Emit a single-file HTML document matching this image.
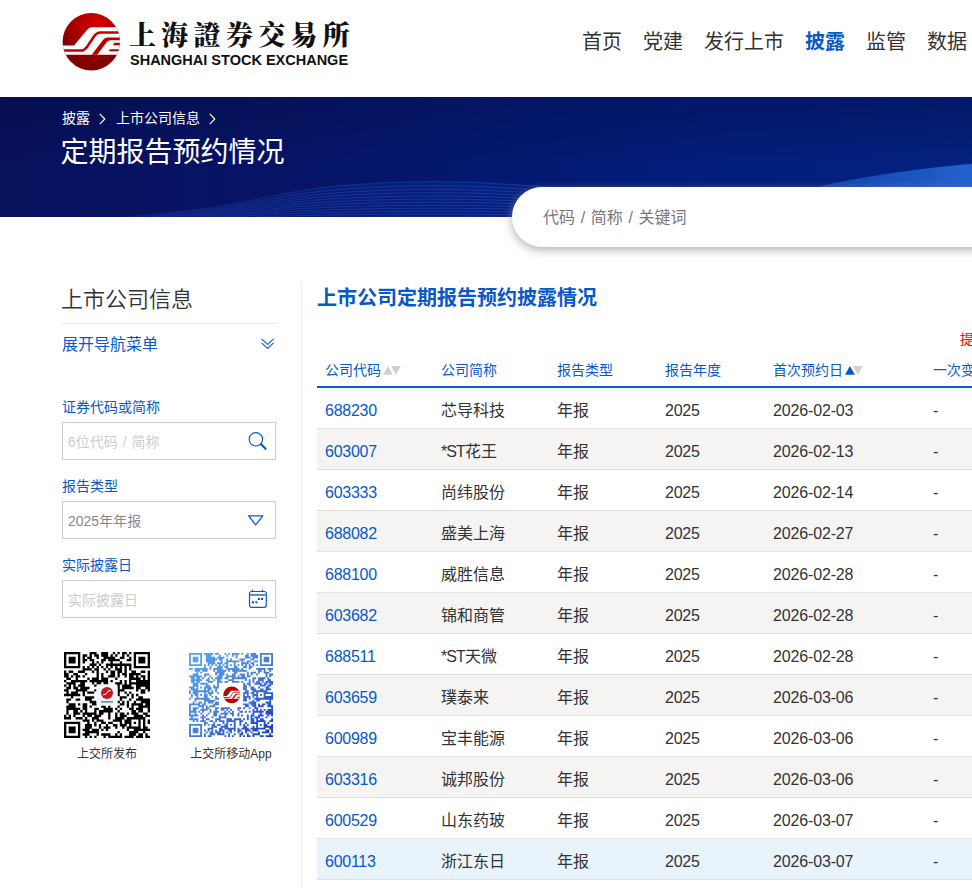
<!DOCTYPE html>
<html lang="zh-CN">
<head>
<meta charset="utf-8">
<title>定期报告预约情况 | 上海证券交易所</title>
<style>
*{box-sizing:border-box;}
html,body{margin:0;padding:0;}
body{width:972px;height:888px;overflow:hidden;background:#fff;position:relative;
 font-family:"Liberation Sans","Noto Sans CJK SC",sans-serif;color:#333;}
a{color:#0858c8;text-decoration:none;cursor:pointer;}
/* header */
header{position:absolute;left:0;top:0;width:972px;height:97px;background:#fff;}
.logo{position:absolute;left:58px;top:8px;width:300px;height:70px;}
.logo-mark{position:absolute;left:0;top:0;}
.logo-cn{position:absolute;left:71px;top:9px;font-family:"Noto Serif CJK SC",serif;font-weight:900;font-size:27px;line-height:34px;letter-spacing:5.3px;color:#111;white-space:nowrap;}
.logo-en{position:absolute;left:72px;top:43px;font-family:"Liberation Sans",sans-serif;font-weight:bold;font-size:14.5px;line-height:18px;color:#111;white-space:nowrap;letter-spacing:0px;}
nav{position:absolute;left:571.5px;top:0;height:97px;white-space:nowrap;}
nav ul{list-style:none;margin:0;padding:0;display:flex;}
nav li{padding:0 10.5px;font-size:20px;line-height:28px;height:28px;margin-top:28px;color:#333;}
nav li.on{color:#0858c8;font-weight:bold;}
/* banner */
.banner{position:absolute;left:0;top:97px;width:972px;height:120px;overflow:hidden;
 background:linear-gradient(180deg,rgba(3,8,50,.28) 0%,rgba(3,8,50,0) 55%),linear-gradient(90deg,#07115c 0%,#061466 30%,#031a73 55%,#021e7c 75%,#03217e 100%);}
.banner > svg{position:absolute;left:0;top:0;}
.crumb{position:absolute;left:62px;top:10px;font-size:14px;line-height:22px;color:#fff;white-space:nowrap;}
.crumb span{display:inline-block;vertical-align:top;}
.crumb svg{display:inline-block;vertical-align:top;margin:5.5px 10px 0 9px;}
.banner h1{position:absolute;left:60.5px;top:37px;margin:0;font-size:28px;line-height:38px;font-weight:normal;color:#fff;white-space:nowrap;}
.search{position:absolute;left:512px;top:187px;width:520px;height:60px;border-radius:30px 0 0 30px;background:#fff;box-shadow:0 3px 10px rgba(150,150,150,.75);}
.search span{position:absolute;left:31px;top:18.5px;font-size:16px;line-height:24px;color:#777;white-space:nowrap;word-spacing:1.2px;}
/* sidebar */
aside{position:absolute;left:62px;top:282px;width:214px;}
aside h2{margin:0;font-size:22px;line-height:30px;font-weight:350;color:#333;position:absolute;left:-1px;top:3px;white-space:nowrap;}
.hr{position:absolute;left:0;top:41px;width:214px;height:1px;background:#e6e6e6;}
.expand{position:absolute;left:0;top:51px;width:214px;font-size:16px;line-height:24px;color:#0858c8;white-space:nowrap;}
.expand svg{position:absolute;left:198px;top:3px;}
.lbl{position:absolute;left:0;font-size:14px;line-height:20px;color:#0858c8;white-space:nowrap;}
.inp{position:absolute;left:0;width:214px;height:38px;border:1px solid #ccc;background:#fff;font-size:14px;line-height:38px;padding-left:5px;color:#ccc;white-space:nowrap;word-spacing:1px;}
.inp.sel{color:#888;}
.inp svg{position:absolute;}
.qr{position:absolute;}
.qrl{position:absolute;font-size:12px;line-height:16px;color:#333;white-space:nowrap;text-align:center;}
.vline{position:absolute;left:301px;top:282px;width:1px;height:620px;background:#ececf0;}
/* main */
main{position:absolute;left:317px;top:282px;width:900px;}
main h3{margin:0;position:absolute;left:0;top:2px;font-size:20px;line-height:28px;font-weight:bold;color:#0858c8;white-space:nowrap;}
.tip{position:absolute;left:643px;top:47px;font-size:14px;line-height:20px;color:#f00;white-space:nowrap;}
table{position:absolute;left:0;top:70px;border-collapse:separate;border-spacing:0;table-layout:fixed;width:900px;}
th{height:36px;padding:2px 8px 0;text-align:left;font-size:14px;font-weight:normal;color:#0858c8;white-space:nowrap;border-bottom:2px solid #0858c8;line-height:20px;vertical-align:middle;}
td{height:41px;padding:5px 8px 0;font-size:16px;line-height:22px;color:#333;white-space:nowrap;border-bottom:1px solid #e0e0e0;vertical-align:middle;}
td.n{letter-spacing:-0.27px;}
td.d{letter-spacing:-0.15px;}
.st{letter-spacing:-0.9px;}
tr:nth-child(even) td{background:#f5f4f3;}
tr.hover td{background:#e9f3fb;}
.sort{display:inline-block;vertical-align:top;margin:6px 0 0 2px;}
</style>
</head>
<body>
<header>
 <div class="logo">
  <svg class="logo-mark" viewBox="0 0 888 888" width="68" height="68">
<defs>
<radialGradient id="lg" cx="500" cy="210" r="520" gradientUnits="userSpaceOnUse"><stop offset="0" stop-color="#d60000"/><stop offset="0.55" stop-color="#a80000"/><stop offset="1" stop-color="#7e0000"/></radialGradient>
<clipPath id="lc"><circle cx="435" cy="440" r="375"/></clipPath>
</defs>
<circle cx="435" cy="440" r="375" fill="url(#lg)"/>
<g clip-path="url(#lc)">
<path d="M440 250H900V610H0V490H210L375 290Q405 250 440 250Z" fill="#fff"/>
<path d="M40 555H300C340 555 355 540 378 508L470 372C495 335 515 320 555 320H830" fill="none" stroke="#c40000" stroke-width="34"/>
<path d="M440 612L590 415Q612 385 652 385H830V420H690Q655 420 638 445L512 612Z" fill="#b80000"/>
<path d="M738 455H830V485H716Z" fill="#b00000"/>
<path d="M682 540H830V566H660Z" fill="#a80000"/>
</g>
</svg>
  <div class="logo-cn">上海證券交易所</div>
  <div class="logo-en">SHANGHAI STOCK EXCHANGE</div>
 </div>
 <nav><ul><li>首页</li><li>党建</li><li>发行上市</li><li class="on">披露</li><li>监管</li><li>数据</li><li>规则</li></ul></nav>
</header>
<section class="banner">
 <svg width="972" height="120" viewBox="0 0 972 120">
  <defs>
   <linearGradient id="sw" gradientUnits="userSpaceOnUse" x1="690" y1="0" x2="972" y2="0"><stop offset="0" stop-color="#0d3aa6" stop-opacity="0"/><stop offset="0.4" stop-color="#1444ac" stop-opacity="0.9"/><stop offset="0.7" stop-color="#1a50ba"/><stop offset="1" stop-color="#2461cc"/></linearGradient><filter id="bl" x="-5%" y="-20%" width="110%" height="140%"><feGaussianBlur stdDeviation="0.7"/></filter>
   <linearGradient id="ln" gradientUnits="userSpaceOnUse" x1="100" y1="0" x2="620" y2="0"><stop offset="0" stop-color="#2f62d4" stop-opacity="0"/><stop offset="0.3" stop-color="#2f62d4" stop-opacity="0.4"/><stop offset="0.8" stop-color="#2f62d4" stop-opacity="0.55"/><stop offset="1" stop-color="#2f62d4" stop-opacity="0.3"/></linearGradient>
   <linearGradient id="hl" gradientUnits="userSpaceOnUse" x1="100" y1="0" x2="620" y2="0"><stop offset="0" stop-color="#1238a8" stop-opacity="0"/><stop offset="0.5" stop-color="#1238a8" stop-opacity="0.22"/><stop offset="1" stop-color="#1238a8" stop-opacity="0.18"/></linearGradient>
  </defs>
  <path d="M690 124C750 110 795 96 818 90C850 82 900 73 980 66V124Z" fill="url(#sw)" filter="url(#bl)"/>
  <path d="M60 124.9 L70 124.4 L80 123.8 L90 123.0 L100 122.2 L110 121.2 L120 120.3 L130 119.3 L140 118.4 L150 117.4 L160 116.3 L170 115.3 L180 114.2 L190 113.1 L200 111.9 L210 110.6 L220 109.1 L230 107.4 L240 105.6 L250 103.7 L260 101.7 L270 99.6 L280 97.6 L290 95.7 L300 94.0 L310 92.4 L320 91.0 L330 89.8 L340 88.7 L350 88.0 L360 87.3 L370 86.7 L380 86.1 L390 85.6 L400 85.2 L410 84.9 L420 84.8 L430 84.7 L440 84.8 L450 84.9 L460 85.0 L470 85.3 L480 85.7 L490 86.2 L500 86.8 L510 87.4 L520 88.1 L530 88.8 L540 89.6 L550 90.4 L560 91.4 L570 92.3 L580 93.4 L590 94.4 L600 95.5 L610 96.4 L620 97.3 L630 98.1 L640 98.7 L640 121 L60 121Z" fill="url(#hl)"/>
  <g fill="none" stroke="url(#ln)" stroke-width="0.7">
   <path d="M60 124.9 L70 124.4 L80 123.8 L90 123.0 L100 122.2 L110 121.2 L120 120.3 L130 119.3 L140 118.4 L150 117.4 L160 116.3 L170 115.3 L180 114.2 L190 113.1 L200 111.9 L210 110.6 L220 109.1 L230 107.4 L240 105.6 L250 103.7 L260 101.7 L270 99.6 L280 97.6 L290 95.7 L300 94.0 L310 92.4 L320 91.0 L330 89.8 L340 88.7 L350 88.0 L360 87.3 L370 86.7 L380 86.1 L390 85.6 L400 85.2 L410 84.9 L420 84.8 L430 84.7 L440 84.8 L450 84.9 L460 85.0 L470 85.3 L480 85.7 L490 86.2 L500 86.8 L510 87.4 L520 88.1 L530 88.8 L540 89.6 L550 90.4 L560 91.4 L570 92.3 L580 93.4 L590 94.4 L600 95.5 L610 96.4 L620 97.3 L630 98.1 L640 98.7"/>
   <path d="M60 124.7 L70 124.3 L80 123.7 L90 123.0 L100 122.3 L110 121.4 L120 120.6 L130 119.7 L140 118.9 L150 118.0 L160 117.1 L170 116.1 L180 115.2 L190 114.2 L200 113.1 L210 111.9 L220 110.6 L230 109.1 L240 107.5 L250 105.8 L260 103.9 L270 102.1 L280 100.3 L290 98.6 L300 97.1 L310 95.7 L320 94.4 L330 93.3 L340 92.4 L350 91.7 L360 91.1 L370 90.5 L380 90.1 L390 89.6 L400 89.2 L410 89.0 L420 88.9 L430 88.8 L440 88.8 L450 88.9 L460 89.1 L470 89.3 L480 89.7 L490 90.1 L500 90.7 L510 91.2 L520 91.8 L530 92.4 L540 93.1 L550 93.9 L560 94.8 L570 95.6 L580 96.5 L590 97.4 L600 98.4 L610 99.3 L620 100.1 L630 100.8 L640 101.3"/>
   <path d="M60 124.6 L70 124.1 L80 123.6 L90 123.0 L100 122.3 L110 121.6 L120 120.8 L130 120.0 L140 119.3 L150 118.5 L160 117.7 L170 116.8 L180 116.0 L190 115.1 L200 114.1 L210 113.1 L220 111.8 L230 110.5 L240 109.1 L250 107.5 L260 105.9 L270 104.3 L280 102.7 L290 101.1 L300 99.8 L310 98.5 L320 97.4 L330 96.4 L340 95.6 L350 94.9 L360 94.4 L370 93.9 L380 93.5 L390 93.1 L400 92.7 L410 92.5 L420 92.4 L430 92.4 L440 92.4 L450 92.5 L460 92.6 L470 92.8 L480 93.1 L490 93.5 L500 94.0 L510 94.5 L520 95.0 L530 95.6 L540 96.2 L550 96.9 L560 97.7 L570 98.5 L580 99.3 L590 100.1 L600 101.0 L610 101.7 L620 102.5 L630 103.1 L640 103.6"/>
   <path d="M60 124.4 L70 124.0 L80 123.6 L90 123.0 L100 122.4 L110 121.7 L120 121.1 L130 120.4 L140 119.7 L150 119.0 L160 118.3 L170 117.5 L180 116.8 L190 116.0 L200 115.1 L210 114.1 L220 113.1 L230 111.9 L240 110.6 L250 109.2 L260 107.8 L270 106.3 L280 104.9 L290 103.5 L300 102.3 L310 101.2 L320 100.2 L330 99.3 L340 98.6 L350 98.0 L360 97.5 L370 97.1 L380 96.7 L390 96.4 L400 96.1 L410 95.9 L420 95.8 L430 95.7 L440 95.7 L450 95.8 L460 95.9 L470 96.1 L480 96.4 L490 96.8 L500 97.2 L510 97.6 L520 98.1 L530 98.6 L540 99.2 L550 99.8 L560 100.5 L570 101.1 L580 101.9 L590 102.6 L600 103.4 L610 104.1 L620 104.7 L630 105.2 L640 105.7"/>
   <path d="M60 124.2 L70 123.9 L80 123.5 L90 123.0 L100 122.5 L110 121.9 L120 121.3 L130 120.7 L140 120.1 L150 119.5 L160 118.8 L170 118.2 L180 117.5 L190 116.8 L200 116.1 L210 115.2 L220 114.3 L230 113.2 L240 112.1 L250 110.9 L260 109.6 L270 108.3 L280 107.1 L290 105.9 L300 104.8 L310 103.8 L320 102.9 L330 102.1 L340 101.5 L350 101.0 L360 100.6 L370 100.2 L380 99.8 L390 99.5 L400 99.3 L410 99.1 L420 99.0 L430 99.0 L440 99.0 L450 99.0 L460 99.2 L470 99.3 L480 99.6 L490 99.9 L500 100.3 L510 100.6 L520 101.1 L530 101.5 L540 102.0 L550 102.6 L560 103.1 L570 103.8 L580 104.4 L590 105.0 L600 105.7 L610 106.3 L620 106.9 L630 107.4 L640 107.8"/>
   <path d="M60 124.1 L70 123.8 L80 123.4 L90 123.0 L100 122.6 L110 122.0 L120 121.5 L130 121.0 L140 120.5 L150 119.9 L160 119.4 L170 118.8 L180 118.2 L190 117.6 L200 117.0 L210 116.2 L220 115.4 L230 114.5 L240 113.5 L250 112.5 L260 111.4 L270 110.2 L280 109.2 L290 108.1 L300 107.2 L310 106.3 L320 105.6 L330 104.9 L340 104.3 L350 103.9 L360 103.5 L370 103.2 L380 102.9 L390 102.6 L400 102.4 L410 102.2 L420 102.2 L430 102.1 L440 102.2 L450 102.2 L460 102.3 L470 102.4 L480 102.7 L490 102.9 L500 103.3 L510 103.6 L520 104.0 L530 104.3 L540 104.8 L550 105.2 L560 105.8 L570 106.3 L580 106.8 L590 107.4 L600 108.0 L610 108.5 L620 109.0 L630 109.4 L640 109.8"/>
   <path d="M60 123.9 L70 123.7 L80 123.4 L90 123.0 L100 122.6 L110 122.2 L120 121.7 L130 121.3 L140 120.8 L150 120.4 L160 119.9 L170 119.4 L180 118.9 L190 118.4 L200 117.9 L210 117.2 L220 116.5 L230 115.8 L240 114.9 L250 114.0 L260 113.1 L270 112.1 L280 111.2 L290 110.3 L300 109.5 L310 108.8 L320 108.1 L330 107.6 L340 107.1 L350 106.7 L360 106.4 L370 106.1 L380 105.9 L390 105.7 L400 105.5 L410 105.3 L420 105.3 L430 105.2 L440 105.3 L450 105.3 L460 105.4 L470 105.5 L480 105.7 L490 105.9 L500 106.2 L510 106.5 L520 106.8 L530 107.1 L540 107.5 L550 107.9 L560 108.3 L570 108.8 L580 109.2 L590 109.7 L600 110.2 L610 110.7 L620 111.1 L630 111.4 L640 111.7"/>
   <path d="M60 123.7 L70 123.5 L80 123.3 L90 123.0 L100 122.7 L110 122.3 L120 122.0 L130 121.6 L140 121.2 L150 120.8 L160 120.4 L170 120.0 L180 119.6 L190 119.2 L200 118.7 L210 118.2 L220 117.6 L230 117.0 L240 116.3 L250 115.6 L260 114.8 L270 114.0 L280 113.2 L290 112.5 L300 111.8 L310 111.2 L320 110.7 L330 110.2 L340 109.8 L350 109.5 L360 109.3 L370 109.0 L380 108.8 L390 108.6 L400 108.5 L410 108.4 L420 108.3 L430 108.3 L440 108.3 L450 108.3 L460 108.4 L470 108.5 L480 108.7 L490 108.9 L500 109.1 L510 109.3 L520 109.6 L530 109.8 L540 110.1 L550 110.5 L560 110.8 L570 111.2 L580 111.6 L590 112.0 L600 112.4 L610 112.8 L620 113.1 L630 113.4 L640 113.7"/>
   <path d="M60 123.6 L70 123.4 L80 123.2 L90 123.0 L100 122.8 L110 122.5 L120 122.2 L130 121.9 L140 121.6 L150 121.3 L160 121.0 L170 120.6 L180 120.3 L190 120.0 L200 119.6 L210 119.2 L220 118.7 L230 118.2 L240 117.7 L250 117.1 L260 116.5 L270 115.8 L280 115.2 L290 114.7 L300 114.1 L310 113.6 L320 113.2 L330 112.8 L340 112.5 L350 112.3 L360 112.1 L370 111.9 L380 111.7 L390 111.6 L400 111.4 L410 111.4 L420 111.3 L430 111.3 L440 111.3 L450 111.3 L460 111.4 L470 111.5 L480 111.6 L490 111.8 L500 111.9 L510 112.1 L520 112.3 L530 112.5 L540 112.8 L550 113.0 L560 113.3 L570 113.6 L580 113.9 L590 114.3 L600 114.6 L610 114.9 L620 115.2 L630 115.4 L640 115.6"/>
   <path d="M60 123.4 L70 123.3 L80 123.2 L90 123.0 L100 122.8 L110 122.6 L120 122.4 L130 122.2 L140 121.9 L150 121.7 L160 121.5 L170 121.2 L180 121.0 L190 120.8 L200 120.5 L210 120.2 L220 119.8 L230 119.4 L240 119.0 L250 118.6 L260 118.1 L270 117.7 L280 117.2 L290 116.8 L300 116.4 L310 116.0 L320 115.7 L330 115.4 L340 115.2 L350 115.0 L360 114.9 L370 114.7 L380 114.6 L390 114.5 L400 114.4 L410 114.3 L420 114.3 L430 114.3 L440 114.3 L450 114.3 L460 114.3 L470 114.4 L480 114.5 L490 114.6 L500 114.7 L510 114.9 L520 115.0 L530 115.2 L540 115.4 L550 115.6 L560 115.8 L570 116.0 L580 116.2 L590 116.5 L600 116.7 L610 116.9 L620 117.1 L630 117.3 L640 117.5"/>
   <path d="M60 123.3 L70 123.2 L80 123.1 L90 123.0 L100 122.9 L110 122.7 L120 122.6 L130 122.4 L140 122.3 L150 122.1 L160 122.0 L170 121.8 L180 121.7 L190 121.5 L200 121.3 L210 121.1 L220 120.9 L230 120.6 L240 120.4 L250 120.1 L260 119.8 L270 119.5 L280 119.2 L290 118.9 L300 118.6 L310 118.4 L320 118.2 L330 118.0 L340 117.8 L350 117.7 L360 117.6 L370 117.5 L380 117.4 L390 117.3 L400 117.3 L410 117.2 L420 117.2 L430 117.2 L440 117.2 L450 117.2 L460 117.3 L470 117.3 L480 117.4 L490 117.4 L500 117.5 L510 117.6 L520 117.7 L530 117.8 L540 117.9 L550 118.1 L560 118.2 L570 118.4 L580 118.5 L590 118.7 L600 118.8 L610 119.0 L620 119.1 L630 119.2 L640 119.3"/>
   <path d="M60 123.1 L70 123.1 L80 123.1 L90 123.0 L100 122.9 L110 122.9 L120 122.8 L130 122.7 L140 122.7 L150 122.6 L160 122.5 L170 122.4 L180 122.3 L190 122.3 L200 122.2 L210 122.1 L220 122.0 L230 121.8 L240 121.7 L250 121.5 L260 121.4 L270 121.2 L280 121.1 L290 120.9 L300 120.8 L310 120.7 L320 120.6 L330 120.5 L340 120.4 L350 120.4 L360 120.3 L370 120.3 L380 120.2 L390 120.2 L400 120.2 L410 120.1 L420 120.1 L430 120.1 L440 120.1 L450 120.1 L460 120.1 L470 120.2 L480 120.2 L490 120.2 L500 120.3 L510 120.3 L520 120.4 L530 120.4 L540 120.5 L550 120.5 L560 120.6 L570 120.7 L580 120.8 L590 120.8 L600 120.9 L610 121.0 L620 121.1 L630 121.1 L640 121.2"/>
   <path d="M60 123.0 L70 123.0 L80 123.0 L90 123.0 L100 123.0 L110 123.0 L120 123.0 L130 123.0 L140 123.0 L150 123.0 L160 123.0 L170 123.0 L180 123.0 L190 123.0 L200 123.0 L210 123.0 L220 123.0 L230 123.0 L240 123.0 L250 123.0 L260 123.0 L270 123.0 L280 123.0 L290 123.0 L300 123.0 L310 123.0 L320 123.0 L330 123.0 L340 123.0 L350 123.0 L360 123.0 L370 123.0 L380 123.0 L390 123.0 L400 123.0 L410 123.0 L420 123.0 L430 123.0 L440 123.0 L450 123.0 L460 123.0 L470 123.0 L480 123.0 L490 123.0 L500 123.0 L510 123.0 L520 123.0 L530 123.0 L540 123.0 L550 123.0 L560 123.0 L570 123.0 L580 123.0 L590 123.0 L600 123.0 L610 123.0 L620 123.0 L630 123.0 L640 123.0"/>
  </g>
 </svg>
 <div class="crumb"><span>披露</span><svg width="7" height="12" viewBox="0 0 7 12" fill="none" stroke="#fff" stroke-width="1.2"><path d="M0.8 0.8L5.8 6L0.8 11.2"/></svg><span>上市公司信息</span><svg width="7" height="12" viewBox="0 0 7 12" fill="none" stroke="#fff" stroke-width="1.2"><path d="M0.8 0.8L5.8 6L0.8 11.2"/></svg></div>
 <h1>定期报告预约情况</h1>
</section>
<div class="search"><span>代码 / 简称 / 关键词</span></div>

<aside>
 <h2>上市公司信息</h2>
 <div class="hr"></div>
 <div class="expand">展开导航菜单
  <svg width="16" height="16" viewBox="0 0 16 16" fill="none" stroke="#0a63d2" stroke-width="1.15"><path d="M1.6 2.8L7.6 8.4L13.6 2.8M1.6 6.9L7.6 12.5L13.6 6.9"/></svg>
 </div>
 <div class="lbl" style="top:115px">证券代码或简称</div>
 <div class="inp" style="top:140px">6位代码 / 简称
  <svg style="left:184px;top:7px" width="22" height="22" viewBox="0 0 22 22" fill="none" stroke="#0858c8" stroke-width="1.15"><circle cx="8.9" cy="9.3" r="6.7"/><path d="M13.9 14.1L18.6 18.8" stroke-width="2.1" stroke-linecap="round"/></svg>
 </div>
 <div class="lbl" style="top:194px">报告类型</div>
 <div class="inp sel" style="top:219px">2025年年报
  <svg style="left:184px;top:10px" width="20" height="16" viewBox="0 0 20 16" fill="none" stroke="#0858c8" stroke-width="1.3" stroke-linejoin="round"><path d="M1.6 3.9H15.8L8.7 12.9Z"/></svg>
 </div>
 <div class="lbl" style="top:273px">实际披露日</div>
 <div class="inp" style="top:298px">实际披露日
  <svg style="left:184px;top:7px" width="22" height="22" viewBox="0 0 22 22" fill="none" stroke="#0858c8" stroke-width="1.2"><rect x="2.5" y="3.5" width="16.8" height="15.8" rx="2"/><path d="M5.4 1.7V3.4M15.6 1.7V3.4"/><path d="M3 6.95H18.8" stroke="#4a8ad2" stroke-width="1.9"/><path d="M10.9 10H12.9V12H10.9ZM14 10H16V12H14ZM5 13.3H7V15.3H5ZM8.4 13.3H10.4V15.3H8.4Z" fill="#0858c8" stroke="none"/></svg>
 </div>
 <svg class="qr" style="left:2px;top:370px" width="86" height="86" viewBox="0 0 37 37"><path d="M0 0h7v1h-7zM11 0h3v1h-3zM16 0h3v1h-3zM21 0h1v1h-1zM23 0h1v1h-1zM25 0h2v1h-2zM28 0h1v1h-1zM30 0h7v1h-7zM0 1h1v1h-1zM6 1h1v1h-1zM8 1h2v1h-2zM11 1h1v1h-1zM13 1h2v1h-2zM16 1h3v1h-3zM20 1h1v1h-1zM22 1h1v1h-1zM25 1h1v1h-1zM27 1h1v1h-1zM30 1h1v1h-1zM36 1h1v1h-1zM0 2h1v1h-1zM2 2h3v1h-3zM6 2h1v1h-1zM8 2h1v1h-1zM10 2h2v1h-2zM14 2h1v1h-1zM17 2h5v1h-5zM24 2h2v1h-2zM28 2h1v1h-1zM30 2h1v1h-1zM32 2h3v1h-3zM36 2h1v1h-1zM0 3h1v1h-1zM2 3h3v1h-3zM6 3h1v1h-1zM8 3h2v1h-2zM11 3h2v1h-2zM16 3h2v1h-2zM19 3h5v1h-5zM27 3h2v1h-2zM30 3h1v1h-1zM32 3h3v1h-3zM36 3h1v1h-1zM0 4h1v1h-1zM2 4h3v1h-3zM6 4h1v1h-1zM8 4h1v1h-1zM12 4h1v1h-1zM14 4h1v1h-1zM16 4h1v1h-1zM20 4h1v1h-1zM24 4h1v1h-1zM30 4h1v1h-1zM32 4h3v1h-3zM36 4h1v1h-1zM0 5h1v1h-1zM6 5h1v1h-1zM11 5h3v1h-3zM15 5h1v1h-1zM18 5h11v1h-11zM30 5h1v1h-1zM36 5h1v1h-1zM0 6h7v1h-7zM8 6h1v1h-1zM10 6h1v1h-1zM12 6h1v1h-1zM14 6h1v1h-1zM16 6h1v1h-1zM18 6h1v1h-1zM20 6h1v1h-1zM22 6h1v1h-1zM24 6h1v1h-1zM26 6h1v1h-1zM28 6h1v1h-1zM30 6h7v1h-7zM8 7h4v1h-4zM13 7h2v1h-2zM17 7h1v1h-1zM19 7h1v1h-1zM22 7h3v1h-3zM26 7h1v1h-1zM28 7h1v1h-1zM0 8h1v1h-1zM2 8h2v1h-2zM6 8h3v1h-3zM12 8h1v1h-1zM14 8h1v1h-1zM18 8h1v1h-1zM20 8h2v1h-2zM23 8h2v1h-2zM26 8h1v1h-1zM29 8h2v1h-2zM33 8h2v1h-2zM36 8h1v1h-1zM0 9h2v1h-2zM4 9h2v1h-2zM9 9h1v1h-1zM14 9h1v1h-1zM16 9h1v1h-1zM20 9h2v1h-2zM23 9h1v1h-1zM25 9h2v1h-2zM28 9h5v1h-5zM36 9h1v1h-1zM0 10h2v1h-2zM3 10h1v1h-1zM5 10h2v1h-2zM8 10h1v1h-1zM14 10h1v1h-1zM16 10h1v1h-1zM19 10h3v1h-3zM23 10h1v1h-1zM26 10h1v1h-1zM28 10h2v1h-2zM31 10h1v1h-1zM33 10h2v1h-2zM36 10h1v1h-1zM1 11h2v1h-2zM5 11h1v1h-1zM10 11h1v1h-1zM12 11h3v1h-3zM16 11h3v1h-3zM22 11h1v1h-1zM28 11h5v1h-5zM34 11h1v1h-1zM36 11h1v1h-1zM0 12h1v1h-1zM3 12h7v1h-7zM11 12h8v1h-8zM20 12h1v1h-1zM24 12h1v1h-1zM26 12h1v1h-1zM28 12h1v1h-1zM31 12h6v1h-6zM1 13h4v1h-4zM7 13h2v1h-2zM12 13h1v1h-1zM14 13h2v1h-2zM17 13h2v1h-2zM22 13h3v1h-3zM26 13h1v1h-1zM28 13h9v1h-9zM0 14h1v1h-1zM2 14h1v1h-1zM4 14h1v1h-1zM6 14h3v1h-3zM13 14h1v1h-1zM23 14h1v1h-1zM25 14h4v1h-4zM31 14h6v1h-6zM1 15h2v1h-2zM4 15h2v1h-2zM7 15h4v1h-4zM23 15h1v1h-1zM25 15h5v1h-5zM31 15h2v1h-2zM35 15h2v1h-2zM0 16h2v1h-2zM5 16h5v1h-5zM13 16h1v1h-1zM23 16h3v1h-3zM31 16h1v1h-1zM33 16h2v1h-2zM36 16h1v1h-1zM1 17h1v1h-1zM3 17h3v1h-3zM8 17h1v1h-1zM10 17h3v1h-3zM23 17h1v1h-1zM26 17h1v1h-1zM28 17h1v1h-1zM33 17h2v1h-2zM0 18h7v1h-7zM8 18h1v1h-1zM23 18h1v1h-1zM27 18h1v1h-1zM29 18h1v1h-1zM31 18h1v1h-1zM3 19h1v1h-1zM9 19h4v1h-4zM24 19h3v1h-3zM29 19h1v1h-1zM32 19h2v1h-2zM1 20h2v1h-2zM5 20h2v1h-2zM9 20h3v1h-3zM24 20h1v1h-1zM28 20h1v1h-1zM31 20h6v1h-6zM1 21h1v1h-1zM11 21h3v1h-3zM23 21h1v1h-1zM25 21h1v1h-1zM27 21h1v1h-1zM30 21h1v1h-1zM33 21h4v1h-4zM2 22h3v1h-3zM6 22h1v1h-1zM8 22h2v1h-2zM12 22h2v1h-2zM24 22h2v1h-2zM27 22h1v1h-1zM29 22h5v1h-5zM35 22h2v1h-2zM1 23h4v1h-4zM8 23h2v1h-2zM11 23h1v1h-1zM16 23h2v1h-2zM19 23h1v1h-1zM23 23h1v1h-1zM27 23h1v1h-1zM29 23h1v1h-1zM32 23h5v1h-5zM1 24h6v1h-6zM8 24h2v1h-2zM13 24h2v1h-2zM17 24h4v1h-4zM22 24h1v1h-1zM24 24h1v1h-1zM28 24h2v1h-2zM31 24h3v1h-3zM36 24h1v1h-1zM1 25h1v1h-1zM4 25h2v1h-2zM7 25h1v1h-1zM9 25h1v1h-1zM13 25h1v1h-1zM15 25h6v1h-6zM23 25h1v1h-1zM29 25h2v1h-2zM32 25h2v1h-2zM36 25h1v1h-1zM1 26h1v1h-1zM4 26h3v1h-3zM8 26h6v1h-6zM15 26h2v1h-2zM19 26h1v1h-1zM22 26h1v1h-1zM24 26h2v1h-2zM27 26h1v1h-1zM29 26h3v1h-3zM34 26h2v1h-2zM0 27h1v1h-1zM2 27h1v1h-1zM4 27h1v1h-1zM8 27h1v1h-1zM10 27h2v1h-2zM13 27h3v1h-3zM19 27h1v1h-1zM22 27h1v1h-1zM24 27h3v1h-3zM30 27h4v1h-4zM35 27h2v1h-2zM0 28h3v1h-3zM5 28h3v1h-3zM9 28h1v1h-1zM12 28h3v1h-3zM19 28h1v1h-1zM22 28h4v1h-4zM27 28h8v1h-8zM8 29h3v1h-3zM12 29h1v1h-1zM14 29h3v1h-3zM21 29h4v1h-4zM26 29h3v1h-3zM32 29h1v1h-1zM34 29h1v1h-1zM36 29h1v1h-1zM0 30h7v1h-7zM10 30h1v1h-1zM13 30h1v1h-1zM16 30h2v1h-2zM19 30h2v1h-2zM24 30h1v1h-1zM26 30h3v1h-3zM30 30h1v1h-1zM32 30h1v1h-1zM34 30h1v1h-1zM36 30h1v1h-1zM0 31h1v1h-1zM6 31h1v1h-1zM9 31h3v1h-3zM13 31h1v1h-1zM15 31h1v1h-1zM18 31h1v1h-1zM21 31h2v1h-2zM24 31h3v1h-3zM28 31h1v1h-1zM32 31h1v1h-1zM34 31h1v1h-1zM0 32h1v1h-1zM2 32h3v1h-3zM6 32h1v1h-1zM9 32h3v1h-3zM15 32h1v1h-1zM17 32h3v1h-3zM22 32h1v1h-1zM25 32h1v1h-1zM27 32h6v1h-6zM34 32h2v1h-2zM0 33h1v1h-1zM2 33h3v1h-3zM6 33h1v1h-1zM8 33h3v1h-3zM12 33h3v1h-3zM16 33h1v1h-1zM18 33h1v1h-1zM27 33h1v1h-1zM30 33h7v1h-7zM0 34h1v1h-1zM2 34h3v1h-3zM6 34h1v1h-1zM9 34h6v1h-6zM23 34h1v1h-1zM28 34h4v1h-4zM34 34h1v1h-1zM0 35h1v1h-1zM6 35h1v1h-1zM8 35h3v1h-3zM14 35h1v1h-1zM16 35h4v1h-4zM22 35h1v1h-1zM24 35h1v1h-1zM28 35h3v1h-3zM32 35h2v1h-2zM35 35h1v1h-1zM0 36h7v1h-7zM9 36h1v1h-1zM11 36h1v1h-1zM13 36h1v1h-1zM17 36h1v1h-1zM19 36h6v1h-6zM26 36h4v1h-4zM31 36h3v1h-3zM35 36h2v1h-2z" fill="#000"/></svg>
 <svg class="qr" style="left:34px;top:402px" width="22" height="22" viewBox="0 0 22 22"><rect x="0.5" y="0.5" width="21" height="21" rx="3" fill="#eef6fb"/><circle cx="11" cy="9" r="6" fill="#c8161d"/><path d="M7 11L10 10L12 7L15 6.5" stroke="#fff" stroke-width="1" fill="none"/><rect x="5" y="17" width="12" height="1.6" fill="#5a8fc8"/></svg>
 <svg class="qr" style="left:127px;top:371px" width="84" height="84" viewBox="0 0 45 45">
  <defs><linearGradient id="qg" x1="0" y1="0" x2="1" y2="1"><stop offset="0" stop-color="#55aaf6"/><stop offset="0.5" stop-color="#4a7fd6"/><stop offset="1" stop-color="#1136c8"/></linearGradient></defs>
  <path d="M0 0h7v1h-7zM8 0h5v1h-5zM14 0h2v1h-2zM19 0h1v1h-1zM21 0h1v1h-1zM23 0h4v1h-4zM28 0h1v1h-1zM31 0h1v1h-1zM33 0h3v1h-3zM38 0h7v1h-7zM0 1h1v1h-1zM6 1h1v1h-1zM9 1h3v1h-3zM16 1h1v1h-1zM20 1h1v1h-1zM23 1h1v1h-1zM25 1h1v1h-1zM30 1h2v1h-2zM33 1h4v1h-4zM38 1h1v1h-1zM44 1h1v1h-1zM0 2h1v1h-1zM2 2h3v1h-3zM6 2h1v1h-1zM9 2h5v1h-5zM15 2h4v1h-4zM25 2h1v1h-1zM30 2h3v1h-3zM34 2h3v1h-3zM38 2h1v1h-1zM40 2h3v1h-3zM44 2h1v1h-1zM0 3h1v1h-1zM2 3h3v1h-3zM6 3h1v1h-1zM9 3h6v1h-6zM16 3h2v1h-2zM20 3h1v1h-1zM22 3h1v1h-1zM27 3h3v1h-3zM33 3h2v1h-2zM38 3h1v1h-1zM40 3h3v1h-3zM44 3h1v1h-1zM0 4h1v1h-1zM2 4h3v1h-3zM6 4h1v1h-1zM9 4h5v1h-5zM17 4h1v1h-1zM20 4h7v1h-7zM28 4h1v1h-1zM31 4h2v1h-2zM35 4h2v1h-2zM38 4h1v1h-1zM40 4h3v1h-3zM44 4h1v1h-1zM0 5h1v1h-1zM6 5h1v1h-1zM10 5h4v1h-4zM15 5h3v1h-3zM19 5h2v1h-2zM24 5h1v1h-1zM28 5h4v1h-4zM33 5h2v1h-2zM38 5h1v1h-1zM44 5h1v1h-1zM0 6h7v1h-7zM8 6h1v1h-1zM10 6h1v1h-1zM12 6h1v1h-1zM14 6h1v1h-1zM16 6h1v1h-1zM18 6h1v1h-1zM20 6h1v1h-1zM22 6h1v1h-1zM24 6h1v1h-1zM26 6h1v1h-1zM28 6h1v1h-1zM30 6h1v1h-1zM32 6h1v1h-1zM34 6h1v1h-1zM36 6h1v1h-1zM38 6h7v1h-7zM8 7h1v1h-1zM11 7h1v1h-1zM15 7h3v1h-3zM19 7h2v1h-2zM24 7h2v1h-2zM29 7h2v1h-2zM32 7h2v1h-2zM0 8h2v1h-2zM3 8h7v1h-7zM11 8h1v1h-1zM13 8h5v1h-5zM20 8h7v1h-7zM28 8h1v1h-1zM32 8h1v1h-1zM36 8h5v1h-5zM42 8h3v1h-3zM3 9h3v1h-3zM7 9h3v1h-3zM13 9h1v1h-1zM15 9h5v1h-5zM21 9h1v1h-1zM23 9h8v1h-8zM37 9h2v1h-2zM40 9h1v1h-1zM43 9h1v1h-1zM4 10h1v1h-1zM6 10h1v1h-1zM14 10h5v1h-5zM24 10h2v1h-2zM31 10h1v1h-1zM33 10h3v1h-3zM37 10h1v1h-1zM40 10h3v1h-3zM2 11h3v1h-3zM8 11h3v1h-3zM14 11h1v1h-1zM16 11h3v1h-3zM20 11h1v1h-1zM23 11h2v1h-2zM27 11h3v1h-3zM31 11h1v1h-1zM33 11h1v1h-1zM36 11h1v1h-1zM41 11h1v1h-1zM43 11h2v1h-2zM0 12h7v1h-7zM8 12h1v1h-1zM11 12h1v1h-1zM15 12h3v1h-3zM20 12h5v1h-5zM26 12h1v1h-1zM28 12h2v1h-2zM31 12h2v1h-2zM41 12h1v1h-1zM43 12h1v1h-1zM1 13h2v1h-2zM4 13h2v1h-2zM7 13h1v1h-1zM10 13h1v1h-1zM12 13h1v1h-1zM14 13h4v1h-4zM19 13h2v1h-2zM23 13h8v1h-8zM34 13h2v1h-2zM37 13h4v1h-4zM42 13h1v1h-1zM1 14h6v1h-6zM9 14h2v1h-2zM13 14h1v1h-1zM15 14h2v1h-2zM21 14h3v1h-3zM30 14h1v1h-1zM32 14h1v1h-1zM34 14h1v1h-1zM37 14h3v1h-3zM42 14h2v1h-2zM1 15h2v1h-2zM4 15h2v1h-2zM10 15h3v1h-3zM15 15h3v1h-3zM19 15h2v1h-2zM23 15h4v1h-4zM28 15h1v1h-1zM32 15h1v1h-1zM34 15h1v1h-1zM36 15h2v1h-2zM39 15h1v1h-1zM41 15h4v1h-4zM2 16h3v1h-3zM6 16h4v1h-4zM15 16h1v1h-1zM29 16h1v1h-1zM31 16h2v1h-2zM35 16h4v1h-4zM40 16h2v1h-2zM43 16h2v1h-2zM2 17h3v1h-3zM9 17h2v1h-2zM13 17h1v1h-1zM15 17h1v1h-1zM29 17h2v1h-2zM32 17h1v1h-1zM38 17h3v1h-3zM42 17h2v1h-2zM0 18h3v1h-3zM4 18h1v1h-1zM6 18h1v1h-1zM8 18h4v1h-4zM13 18h3v1h-3zM29 18h2v1h-2zM33 18h2v1h-2zM37 18h1v1h-1zM41 18h2v1h-2zM1 19h4v1h-4zM8 19h1v1h-1zM10 19h2v1h-2zM14 19h1v1h-1zM29 19h2v1h-2zM33 19h3v1h-3zM38 19h2v1h-2zM41 19h3v1h-3zM0 20h1v1h-1zM2 20h9v1h-9zM12 20h1v1h-1zM14 20h1v1h-1zM30 20h2v1h-2zM34 20h8v1h-8zM0 21h1v1h-1zM2 21h3v1h-3zM8 21h1v1h-1zM10 21h3v1h-3zM15 21h1v1h-1zM29 21h3v1h-3zM33 21h2v1h-2zM36 21h1v1h-1zM40 21h5v1h-5zM1 22h1v1h-1zM3 22h2v1h-2zM6 22h1v1h-1zM8 22h2v1h-2zM11 22h1v1h-1zM29 22h1v1h-1zM31 22h1v1h-1zM34 22h3v1h-3zM38 22h1v1h-1zM40 22h1v1h-1zM44 22h1v1h-1zM1 23h1v1h-1zM4 23h1v1h-1zM8 23h2v1h-2zM12 23h1v1h-1zM14 23h1v1h-1zM29 23h4v1h-4zM34 23h1v1h-1zM36 23h1v1h-1zM40 23h5v1h-5zM0 24h1v1h-1zM3 24h8v1h-8zM14 24h2v1h-2zM29 24h2v1h-2zM32 24h1v1h-1zM35 24h10v1h-10zM3 25h1v1h-1zM8 25h6v1h-6zM29 25h2v1h-2zM34 25h1v1h-1zM36 25h2v1h-2zM43 25h1v1h-1zM2 26h1v1h-1zM5 26h2v1h-2zM8 26h1v1h-1zM10 26h3v1h-3zM14 26h2v1h-2zM32 26h4v1h-4zM41 26h3v1h-3zM0 27h6v1h-6zM7 27h2v1h-2zM13 27h3v1h-3zM29 27h3v1h-3zM33 27h3v1h-3zM37 27h1v1h-1zM39 27h2v1h-2zM42 27h2v1h-2zM0 28h1v1h-1zM5 28h3v1h-3zM9 28h1v1h-1zM11 28h3v1h-3zM30 28h2v1h-2zM34 28h2v1h-2zM37 28h3v1h-3zM42 28h3v1h-3zM0 29h1v1h-1zM2 29h3v1h-3zM7 29h1v1h-1zM9 29h2v1h-2zM14 29h2v1h-2zM17 29h5v1h-5zM26 29h2v1h-2zM29 29h1v1h-1zM32 29h1v1h-1zM35 29h2v1h-2zM44 29h1v1h-1zM0 30h1v1h-1zM2 30h2v1h-2zM6 30h4v1h-4zM11 30h1v1h-1zM14 30h1v1h-1zM17 30h2v1h-2zM20 30h1v1h-1zM22 30h1v1h-1zM26 30h1v1h-1zM34 30h1v1h-1zM36 30h1v1h-1zM38 30h1v1h-1zM40 30h1v1h-1zM42 30h3v1h-3zM0 31h4v1h-4zM5 31h1v1h-1zM7 31h1v1h-1zM11 31h1v1h-1zM13 31h3v1h-3zM19 31h1v1h-1zM21 31h1v1h-1zM23 31h1v1h-1zM27 31h2v1h-2zM30 31h1v1h-1zM32 31h1v1h-1zM34 31h6v1h-6zM41 31h4v1h-4zM0 32h1v1h-1zM3 32h1v1h-1zM6 32h1v1h-1zM10 32h1v1h-1zM13 32h2v1h-2zM17 32h4v1h-4zM22 32h2v1h-2zM26 32h1v1h-1zM34 32h1v1h-1zM38 32h1v1h-1zM41 32h4v1h-4zM0 33h5v1h-5zM7 33h1v1h-1zM9 33h1v1h-1zM13 33h2v1h-2zM16 33h1v1h-1zM19 33h1v1h-1zM23 33h1v1h-1zM26 33h1v1h-1zM28 33h1v1h-1zM31 33h1v1h-1zM33 33h2v1h-2zM37 33h3v1h-3zM42 33h1v1h-1zM44 33h1v1h-1zM1 34h1v1h-1zM6 34h3v1h-3zM12 34h1v1h-1zM16 34h4v1h-4zM31 34h1v1h-1zM33 34h1v1h-1zM35 34h3v1h-3zM41 34h1v1h-1zM0 35h5v1h-5zM7 35h1v1h-1zM9 35h2v1h-2zM14 35h3v1h-3zM20 35h3v1h-3zM24 35h4v1h-4zM29 35h1v1h-1zM31 35h1v1h-1zM33 35h2v1h-2zM36 35h1v1h-1zM38 35h2v1h-2zM44 35h1v1h-1zM2 36h1v1h-1zM4 36h1v1h-1zM6 36h3v1h-3zM11 36h2v1h-2zM14 36h1v1h-1zM16 36h3v1h-3zM20 36h5v1h-5zM27 36h2v1h-2zM33 36h2v1h-2zM36 36h5v1h-5zM43 36h2v1h-2zM8 37h2v1h-2zM13 37h1v1h-1zM18 37h1v1h-1zM20 37h1v1h-1zM24 37h1v1h-1zM27 37h1v1h-1zM30 37h1v1h-1zM33 37h4v1h-4zM40 37h1v1h-1zM42 37h1v1h-1zM0 38h7v1h-7zM8 38h1v1h-1zM10 38h1v1h-1zM12 38h2v1h-2zM15 38h2v1h-2zM19 38h2v1h-2zM22 38h1v1h-1zM24 38h1v1h-1zM27 38h1v1h-1zM29 38h1v1h-1zM31 38h1v1h-1zM36 38h1v1h-1zM38 38h1v1h-1zM40 38h2v1h-2zM44 38h1v1h-1zM0 39h1v1h-1zM6 39h1v1h-1zM12 39h3v1h-3zM17 39h4v1h-4zM24 39h1v1h-1zM29 39h2v1h-2zM34 39h1v1h-1zM36 39h1v1h-1zM40 39h5v1h-5zM0 40h1v1h-1zM2 40h3v1h-3zM6 40h1v1h-1zM10 40h3v1h-3zM16 40h2v1h-2zM19 40h6v1h-6zM26 40h1v1h-1zM28 40h4v1h-4zM33 40h8v1h-8zM43 40h2v1h-2zM0 41h1v1h-1zM2 41h3v1h-3zM6 41h1v1h-1zM8 41h1v1h-1zM10 41h1v1h-1zM12 41h1v1h-1zM14 41h1v1h-1zM16 41h3v1h-3zM21 41h2v1h-2zM24 41h1v1h-1zM26 41h2v1h-2zM30 41h3v1h-3zM34 41h3v1h-3zM41 41h2v1h-2zM44 41h1v1h-1zM0 42h1v1h-1zM2 42h3v1h-3zM6 42h1v1h-1zM9 42h1v1h-1zM11 42h2v1h-2zM14 42h3v1h-3zM18 42h1v1h-1zM20 42h1v1h-1zM22 42h1v1h-1zM26 42h1v1h-1zM28 42h1v1h-1zM30 42h1v1h-1zM33 42h1v1h-1zM37 42h1v1h-1zM39 42h4v1h-4zM44 42h1v1h-1zM0 43h1v1h-1zM6 43h1v1h-1zM8 43h1v1h-1zM11 43h3v1h-3zM15 43h4v1h-4zM21 43h1v1h-1zM24 43h1v1h-1zM27 43h2v1h-2zM31 43h1v1h-1zM34 43h4v1h-4zM43 43h1v1h-1zM0 44h7v1h-7zM8 44h1v1h-1zM10 44h2v1h-2zM19 44h1v1h-1zM21 44h1v1h-1zM23 44h1v1h-1zM27 44h1v1h-1zM29 44h1v1h-1zM31 44h2v1h-2zM34 44h1v1h-1zM38 44h2v1h-2zM41 44h4v1h-4z" fill="url(#qg)"/></svg>
 <svg class="qr" style="left:159.5px;top:402.5px" width="20" height="20" viewBox="0 0 888 888"><defs><clipPath id="lc2"><circle cx="435" cy="440" r="375"/></clipPath></defs><circle cx="435" cy="440" r="375" fill="#c00000"/>
<g clip-path="url(#lc2)">
<path d="M440 250H900V610H0V490H210L375 290Q405 250 440 250Z" fill="#fff"/>
<path d="M40 555H300C340 555 355 540 378 508L470 372C495 335 515 320 555 320H830" fill="none" stroke="#c40000" stroke-width="40"/>
<path d="M440 612L590 415Q612 385 652 385H830V425H690Q655 425 638 445L512 612Z" fill="#b80000"/>
<path d="M682 520H830V566H660Z" fill="#a80000"/>
</g></svg>
 <div class="qrl" style="left:0;top:464px;width:90px">上交所发布</div>
 <div class="qrl" style="left:124px;top:464px;width:90px">上交所移动App</div>
</aside>
<div class="vline"></div>

<main>
 <h3>上市公司定期报告预约披露情况</h3>
 <div class="tip">提示：以下信息仅供参考</div>
 <table>
  <colgroup><col style="width:116px"><col style="width:116px"><col style="width:108px"><col style="width:108px"><col style="width:160px"><col style="width:160px"><col></colgroup>
  <thead><tr>
   <th>公司代码<svg class="sort" width="18" height="9" viewBox="0 0 18 9"><path d="M0 8.85L4.9 0L9.85 8.85Z" fill="#d0d0d0"/><path d="M8 0H17.8L12.9 8.85Z" fill="#d0d0d0"/></svg></th>
   <th>公司简称</th><th>报告类型</th><th>报告年度</th>
   <th>首次预约日<svg class="sort" width="18" height="9" viewBox="0 0 18 9"><path d="M8 0H17.8L12.9 8.85Z" fill="#d0d0d0"/><path d="M0 8.85L4.9 0L9.85 8.85Z" fill="#0858c8"/></svg></th>
   <th>一次变更日</th><th>二次变更日</th>
  </tr></thead>
  <tbody>
<tr><td class="n"><a>688230</a></td><td>芯导科技</td><td>年报</td><td class="n">2025</td><td class="d">2026-02-03</td><td>-</td><td>-</td></tr>
<tr><td class="n"><a>603007</a></td><td><span class="st">*ST</span>花王</td><td>年报</td><td class="n">2025</td><td class="d">2026-02-13</td><td>-</td><td>-</td></tr>
<tr><td class="n"><a>603333</a></td><td>尚纬股份</td><td>年报</td><td class="n">2025</td><td class="d">2026-02-14</td><td>-</td><td>-</td></tr>
<tr><td class="n"><a>688082</a></td><td>盛美上海</td><td>年报</td><td class="n">2025</td><td class="d">2026-02-27</td><td>-</td><td>-</td></tr>
<tr><td class="n"><a>688100</a></td><td>威胜信息</td><td>年报</td><td class="n">2025</td><td class="d">2026-02-28</td><td>-</td><td>-</td></tr>
<tr><td class="n"><a>603682</a></td><td>锦和商管</td><td>年报</td><td class="n">2025</td><td class="d">2026-02-28</td><td>-</td><td>-</td></tr>
<tr><td class="n"><a>688511</a></td><td><span class="st">*ST</span>天微</td><td>年报</td><td class="n">2025</td><td class="d">2026-02-28</td><td>-</td><td>-</td></tr>
<tr><td class="n"><a>603659</a></td><td>璞泰来</td><td>年报</td><td class="n">2025</td><td class="d">2026-03-06</td><td>-</td><td>-</td></tr>
<tr><td class="n"><a>600989</a></td><td>宝丰能源</td><td>年报</td><td class="n">2025</td><td class="d">2026-03-06</td><td>-</td><td>-</td></tr>
<tr><td class="n"><a>603316</a></td><td>诚邦股份</td><td>年报</td><td class="n">2025</td><td class="d">2026-03-06</td><td>-</td><td>-</td></tr>
<tr><td class="n"><a>600529</a></td><td>山东药玻</td><td>年报</td><td class="n">2025</td><td class="d">2026-03-07</td><td>-</td><td>-</td></tr>
<tr class="hover"><td class="n"><a>600113</a></td><td>浙江东日</td><td>年报</td><td class="n">2025</td><td class="d">2026-03-07</td><td>-</td><td>-</td></tr>
<tr><td class="n"><a>600436</a></td><td>片仔癀</td><td>年报</td><td class="n">2025</td><td class="d">2026-03-07</td><td>-</td><td>-</td></tr>
  </tbody>
 </table>
</main>
</body>
</html>
